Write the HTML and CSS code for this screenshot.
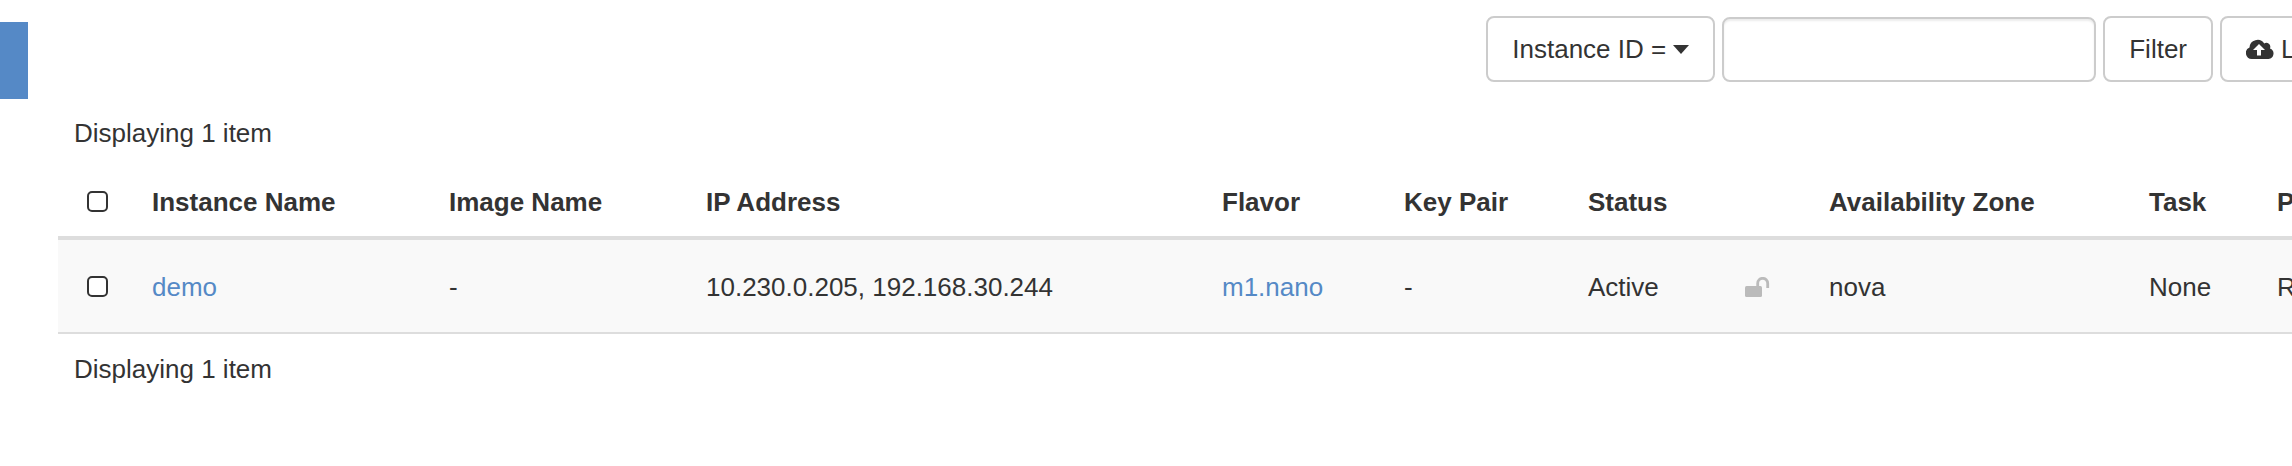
FILE: index.html
```html
<!DOCTYPE html>
<html lang="en">
<head>
<meta charset="utf-8">
<title>Instances</title>
<link rel="stylesheet" href="styles.css">
</head>
<body>
<div class="page">
  <aside class="sidebar"><div class="sidebar-active"></div></aside>
  <main class="content">
    <form class="toolbar">
      <button type="button" class="btn">Instance ID =
        <svg class="caret" viewBox="0 0 16 9" aria-hidden="true"><path d="M0 0h16L8 9z"/></svg>
      </button>
      <input class="filter-input" type="text" aria-label="Filter value">
      <button type="button" class="btn">Filter</button>
      <div class="launch">
        <button type="button" class="btn">
          <svg class="cloud" viewBox="0 0 28 20" aria-hidden="true"><path fill-rule="evenodd" d="M6 20a6 6 0 0 1-2.500-11.500A8 8 0 0 1 18.200 4.500 4 4 0 0 1 24 9.400 5.500 5.500 0 0 1 22.500 20zM13 5L7 11h4v5.500h4V11h4z"/></svg>
          Launch Instance
        </button>
      </div>
    </form>
    <div class="count">Displaying 1 item</div>
    <table class="instances">
      <colgroup>
        <col class="col-check"><col class="col-name"><col class="col-image"><col class="col-ip"><col class="col-flavor"><col class="col-key"><col class="col-status"><col class="col-lock"><col class="col-zone"><col class="col-task"><col>
      </colgroup>
      <thead>
        <tr>
          <th class="check"><input type="checkbox" aria-label="Select all"></th>
          <th>Instance Name</th><th>Image Name</th><th>IP Address</th><th>Flavor</th><th>Key Pair</th><th>Status</th><th></th><th>Availability Zone</th><th>Task</th><th>Power State</th>
        </tr>
      </thead>
      <tbody>
        <tr>
          <td class="check"><input type="checkbox" aria-label="Select demo"></td>
          <td><a href="#demo">demo</a></td><td>-</td><td>10.230.0.205, 192.168.30.244</td><td><a href="#flavor">m1.nano</a></td><td>-</td><td>Active</td>
          <td><svg class="lock" viewBox="0 0 25 20" role="img" aria-label="Unlocked"><rect y="9" width="17" height="11" rx="1.500"/><path d="M12.700 10V6.300a5 5 0 0 1 10 0V11" fill="none" stroke="#bbb" stroke-width="2.800"/></svg></td>
          <td>nova</td><td>None</td><td>Running</td>
        </tr>
      </tbody>
    </table>
    <div class="count">Displaying 1 item</div>
  </main>
</div>
</body>
</html>
```
FILE: styles.css
```css
* { box-sizing: border-box; }

body {
  margin: 0;
  overflow-x: hidden;
  background: #fff;
  color: #333;
  font: 26px/38px "Liberation Sans", Arial, sans-serif;
}

.page { display: flex; gap: 30px; }

.sidebar { flex: 0 0 28px; padding-top: 22px; }
.sidebar-active { height: 77px; background: #5589c6; }

.content { flex: 1; min-width: 0; overflow: hidden; }

.toolbar {
  display: flex;
  justify-content: flex-end;
  gap: 7px;
  padding: 16px 0;
}

.btn {
  display: flex;
  align-items: center;
  gap: 7px;
  height: 66px;
  padding: 0 24px;
  border: 2px solid #ccc;
  border-radius: 8px;
  background: #fff;
  color: inherit;
  font: inherit;
  white-space: nowrap;
}

.filter-input {
  width: 374px;
  height: 65px;
  align-self: flex-end;
  padding: 0 24px;
  border: 2px solid #ccc;
  border-radius: 8px;
  background: #fff;
  box-shadow: inset 0 2px 2px rgba(0, 0, 0, 0.08);
  color: inherit;
  font: inherit;
}

/* The launch button runs past the right edge of the toolbar. */
.launch { flex: 0 0 72px; min-width: 0; }

.caret { width: 16px; height: 9px; fill: #333; }
.cloud { width: 28px; height: 20px; flex: none; fill: #333; }
.lock { display: block; width: 25px; height: 20px; fill: #bbb; }

.count { padding: 16px 16px 15px; }

.instances {
  width: 100%;
  table-layout: fixed;
  border-collapse: separate;
  border-spacing: 0;
}

.col-check { width: 78px; }
.col-name { width: 297px; }
.col-image { width: 257px; }
.col-ip { width: 516px; }
.col-flavor { width: 182px; }
.col-key { width: 184px; }
.col-status { width: 157px; }
.col-lock { width: 84px; }
.col-zone { width: 320px; }
.col-task { width: 128px; }

th, td {
  padding: 16px 0 15px 16px;
  text-align: left;
  vertical-align: middle;
  white-space: nowrap;
}

th { border-bottom: 4px solid #ddd; }

td {
  height: 94px;
  border-bottom: 2px solid #ddd;
  background: #f9f9f9;
}

.check { padding: 0; text-align: center; }

.check input {
  appearance: none;
  display: block;
  width: 21px;
  height: 21px;
  margin: 0 auto;
  border: 2px solid #333;
  border-radius: 5px;
  background: #fff;
}

a { color: #5589c6; text-decoration: none; }
```
